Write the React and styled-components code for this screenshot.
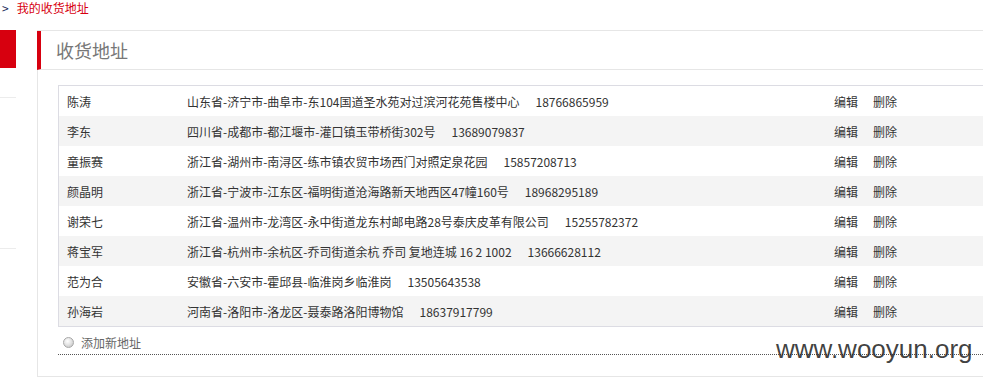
import React from 'react';
import styled, { createGlobalStyle } from 'styled-components';

const GlobalStyle = createGlobalStyle`
  html, body {
    margin: 0;
    padding: 0;
    background: #fff;
    overflow: hidden;
  }
  body {
    font-family: "Noto Sans CJK SC", "Liberation Sans", sans-serif;
    font-size: 12px;
    color: #333;
  }
`;

const Page = styled.div`
  position: relative;
  width: 983px;
  height: 380px;
  overflow: hidden;
`;

const Breadcrumb = styled.div`
  height: 30px;
  padding-left: 2px;
  line-height: 16px;
  display: flex;
  align-items: flex-start;
  gap: 8px;
`;

const Arrow = styled.span`
  color: #1a2a5a;
`;

const Crumb = styled.span`
  color: #d7000f;
`;

const Body = styled.div`
  display: flex;
  align-items: flex-start;
`;

const SideNav = styled.div`
  width: 16px;
  flex-shrink: 0;
  display: flex;
  flex-direction: column;
`;

const SideActive = styled.div`
  height: 38px;
  background: #d7000f;
`;

const SideDivider = styled.div`
  height: 1px;
  background: #ececec;
  margin-top: ${(p) => p.$gap}px;
`;

const Panel = styled.div`
  margin-left: 21px;
  width: 1000px;
  flex-shrink: 0;
  border: 1px solid #e6e6e6;
  border-right: none;
  padding-bottom: 21px;
`;

const PanelHeader = styled.div`
  height: 38px;
  margin-left: -1px;
  border-left: 4px solid #d7000f;
  border-bottom: 1px solid #e6e6e6;
  display: flex;
  align-items: center;
  padding-left: 15px;
`;

const PanelTitle = styled.h2`
  margin: 0;
  font-size: 18px;
  font-weight: normal;
  color: #777;
`;

const PanelContent = styled.div`
  padding: 15px 0 0 20px;
`;

const Table = styled.div`
  width: 960px;
  border: 1px solid #dcdce3;
  border-right: none;
`;

const Row = styled.div`
  display: flex;
  align-items: center;
  height: 30px;
  background: ${(p) => (p.$alt ? '#f4f4f4' : '#fff')};
`;

const NameCell = styled.div`
  width: 120px;
  padding-left: 8px;
  flex-shrink: 0;
`;

const AddressCell = styled.div`
  flex: 1;
  white-space: nowrap;
`;

const Phone = styled.span`
  margin-left: 16px;
`;

const Actions = styled.div`
  width: 185px;
  flex-shrink: 0;
  display: flex;
  gap: 15px;
`;

const ActionLink = styled.a`
  color: #333;
  text-decoration: none;
  cursor: pointer;
`;

const AddRow = styled.div`
  width: 960px;
  margin-top: 4px;
  padding-left: 5px;
  height: 23px;
  display: flex;
  align-items: center;
  gap: 7px;
  border-bottom: 1px dotted #555;
  color: #666;
`;

const Radio = styled.span`
  width: 11px;
  height: 11px;
  border-radius: 50%;
  border: 1px solid #a8a8a8;
  box-sizing: border-box;
  background: radial-gradient(circle at 40% 35%, #fff 0%, #e4e4e4 45%, #bcbcbc 100%);
`;

const Watermark = styled.div`
  position: absolute;
  left: 776px;
  top: 334px;
  font-family: "Liberation Sans", Arial, sans-serif;
  font-size: 26px;
  color: rgba(40, 40, 40, 0.88);
  pointer-events: none;
`;

const addresses = [
  { name: '陈涛', address: '山东省-济宁市-曲阜市-东104国道圣水苑对过滨河花苑售楼中心', phone: '18766865959' },
  { name: '李东', address: '四川省-成都市-都江堰市-灌口镇玉带桥街302号', phone: '13689079837' },
  { name: '童振赛', address: '浙江省-湖州市-南浔区-练市镇农贸市场西门对照定泉花园', phone: '15857208713' },
  { name: '颜晶明', address: '浙江省-宁波市-江东区-福明街道沧海路新天地西区47幢160号', phone: '18968295189' },
  { name: '谢荣七', address: '浙江省-温州市-龙湾区-永中街道龙东村邮电路28号泰庆皮革有限公司', phone: '15255782372' },
  { name: '蒋宝军', address: '浙江省-杭州市-余杭区-乔司街道余杭 乔司 复地连城 16 2 1002', phone: '13666628112' },
  { name: '范为合', address: '安徽省-六安市-霍邱县-临淮岗乡临淮岗', phone: '13505643538' },
  { name: '孙海岩', address: '河南省-洛阳市-洛龙区-聂泰路洛阳博物馆', phone: '18637917799' },
];

const App = () => {
  return (
    <Page>
      <GlobalStyle />
      <Breadcrumb>
        <Arrow>&gt;</Arrow>
        <Crumb>我的收货地址</Crumb>
      </Breadcrumb>

      <Body>
        <SideNav>
          <SideActive />
          <SideDivider $gap={29} />
          <SideDivider $gap={150} />
        </SideNav>

        <Panel>
          <PanelHeader>
            <PanelTitle>收货地址</PanelTitle>
          </PanelHeader>

          <PanelContent>
            <Table>
              {addresses.map((item, i) => (
                <Row key={item.name} $alt={i % 2 === 1}>
                  <NameCell>{item.name}</NameCell>
                  <AddressCell>
                    {item.address}
                    <Phone>{item.phone}</Phone>
                  </AddressCell>
                  <Actions>
                    <ActionLink>编辑</ActionLink>
                    <ActionLink>删除</ActionLink>
                  </Actions>
                </Row>
              ))}
            </Table>

            <AddRow>
              <Radio />
              添加新地址
            </AddRow>
          </PanelContent>
        </Panel>
      </Body>

      <Watermark>www.wooyun.org</Watermark>
    </Page>
  );
};

export default App;
